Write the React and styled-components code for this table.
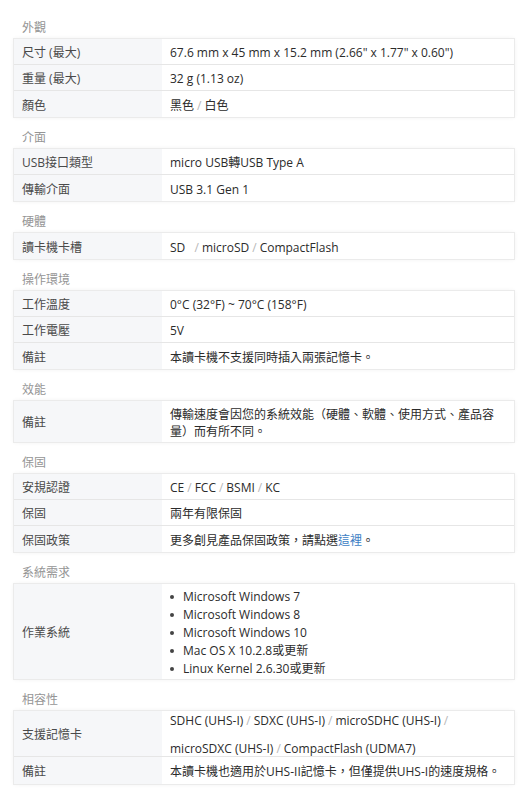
import React from "react";
import styled, { createGlobalStyle } from "styled-components";

const Global = createGlobalStyle`
  html, body { margin: 0; padding: 0; background: #fff; }
  body { font-family: "Open Sans", "Noto Sans CJK TC", sans-serif; color: #333; }
`;

const Page = styled.div`
  padding: 7px 14px 10px;
`;

const Heading = styled.div`
  padding: 11px 0 1px 8px;
  height: 20px;
  line-height: 20px;
  font-size: 12px;
  color: #959595;
`;

const Table = styled.div`
  box-shadow: 0 0 0 1px #ebebeb, 0 0 5px rgba(0, 0, 0, 0.07);
  background: #fff;
`;

const Row = styled.div`
  display: grid;
  grid-template-columns: 148px 1fr;
  grid-template-rows: minmax(0, 1fr);
  box-sizing: border-box;
  height: ${(p) => p.$h}px;
  border-bottom: 1px solid #e6e6e6;
  &:last-child { border-bottom: none; }
`;

const Label = styled.div`
  background: #f6f7f9;
  padding: 2px 8px 0;
  font-size: 12px;
  line-height: 17px;
  color: #4a4a4a;
  display: flex;
  align-items: center;
  min-height: 0;
`;

const Value = styled.div`
  padding: 2px 8px 0;
  font-size: 12px;
  line-height: 17px;
  color: #2b2b2b;
  display: flex;
  align-items: center;
  min-width: 0;
  min-height: 0;
`;

const Lines = styled.div``;

const Line = styled.div`
  height: 28px;
  line-height: 28px;
  white-space: nowrap;
`;

const Sep = styled.span`
  color: #b8b8b8;
  margin: 0 3px;
`;

const Link = styled.span`
  color: #3b7dc4;
`;

const List = styled.ul`
  list-style: none;
  margin: 0;
  padding: 0;
`;

const Item = styled.li`
  height: 18px;
  line-height: 18px;
  display: flex;
  align-items: center;
  &::before {
    content: "";
    width: 4px;
    height: 4px;
    border-radius: 50%;
    background: #444;
    margin: 0 9px 0 0;
    flex: none;
  }
`;

const S = () => <Sep>/</Sep>;

const sections = [
  {
    title: "外觀",
    rows: [
      ["尺寸 (最大)", '67.6 mm x 45 mm x 15.2 mm (2.66" x 1.77" x 0.60")'],
      ["重量 (最大)", "32 g (1.13 oz)"],
      ["顏色", <>黑色<S />白色</>],
    ],
  },
  {
    title: "介面",
    rows: [
      ["USB接口類型", "micro USB轉USB Type A"],
      ["傳輸介面", "USB 3.1 Gen 1"],
    ],
  },
  {
    title: "硬體",
    rows: [["讀卡機卡槽", <>SD&nbsp;&nbsp;<S />microSD<S />CompactFlash</>]],
  },
  {
    title: "操作環境",
    rows: [
      ["工作溫度", "0°C (32°F) ~ 70°C (158°F)"],
      ["工作電壓", "5V"],
      ["備註", "本讀卡機不支援同時插入兩張記憶卡。"],
    ],
  },
  {
    title: "效能",
    rows: [["備註", "傳輸速度會因您的系統效能（硬體、軟體、使用方式、產品容量）而有所不同。", 41]],
  },
  {
    title: "保固",
    rows: [
      ["安規認證", <>CE<S />FCC<S />BSMI<S />KC</>],
      ["保固", "兩年有限保固"],
      ["保固政策", <>更多創見產品保固政策，請點選<Link>這裡</Link>。</>],
    ],
  },
  {
    title: "系統需求",
    rows: [
      [
        "作業系統",
        <List>
          <Item>Microsoft Windows 7</Item>
          <Item>Microsoft Windows 8</Item>
          <Item>Microsoft Windows 10</Item>
          <Item>Mac OS X 10.2.8或更新</Item>
          <Item>Linux Kernel 2.6.30或更新</Item>
        </List>,
        95,
      ],
    ],
  },
  {
    title: "相容性",
    rows: [
      [
        "支援記憶卡",
        <Lines>
          <Line>SDHC (UHS-I)<S />SDXC (UHS-I)<S />microSDHC (UHS-I)<S /></Line>
          <Line>microSDXC (UHS-I)<S />CompactFlash (UDMA7)</Line>
        </Lines>,
        46,
      ],
      ["備註", "本讀卡機也適用於UHS-II記憶卡，但僅提供UHS-I的速度規格。", 27],
    ],
  },
];

export default function App() {
  return (
    <>
      <Global />
      <Page>
        {sections.map((s) => (
          <section key={s.title}>
            <Heading>{s.title}</Heading>
            <Table>
              {s.rows.map(([l, v, h], i) => (
                <Row key={i} $h={h || 26}>
                  <Label>{l}</Label>
                  <Value>{v}</Value>
                </Row>
              ))}
            </Table>
          </section>
        ))}
      </Page>
    </>
  );
}
